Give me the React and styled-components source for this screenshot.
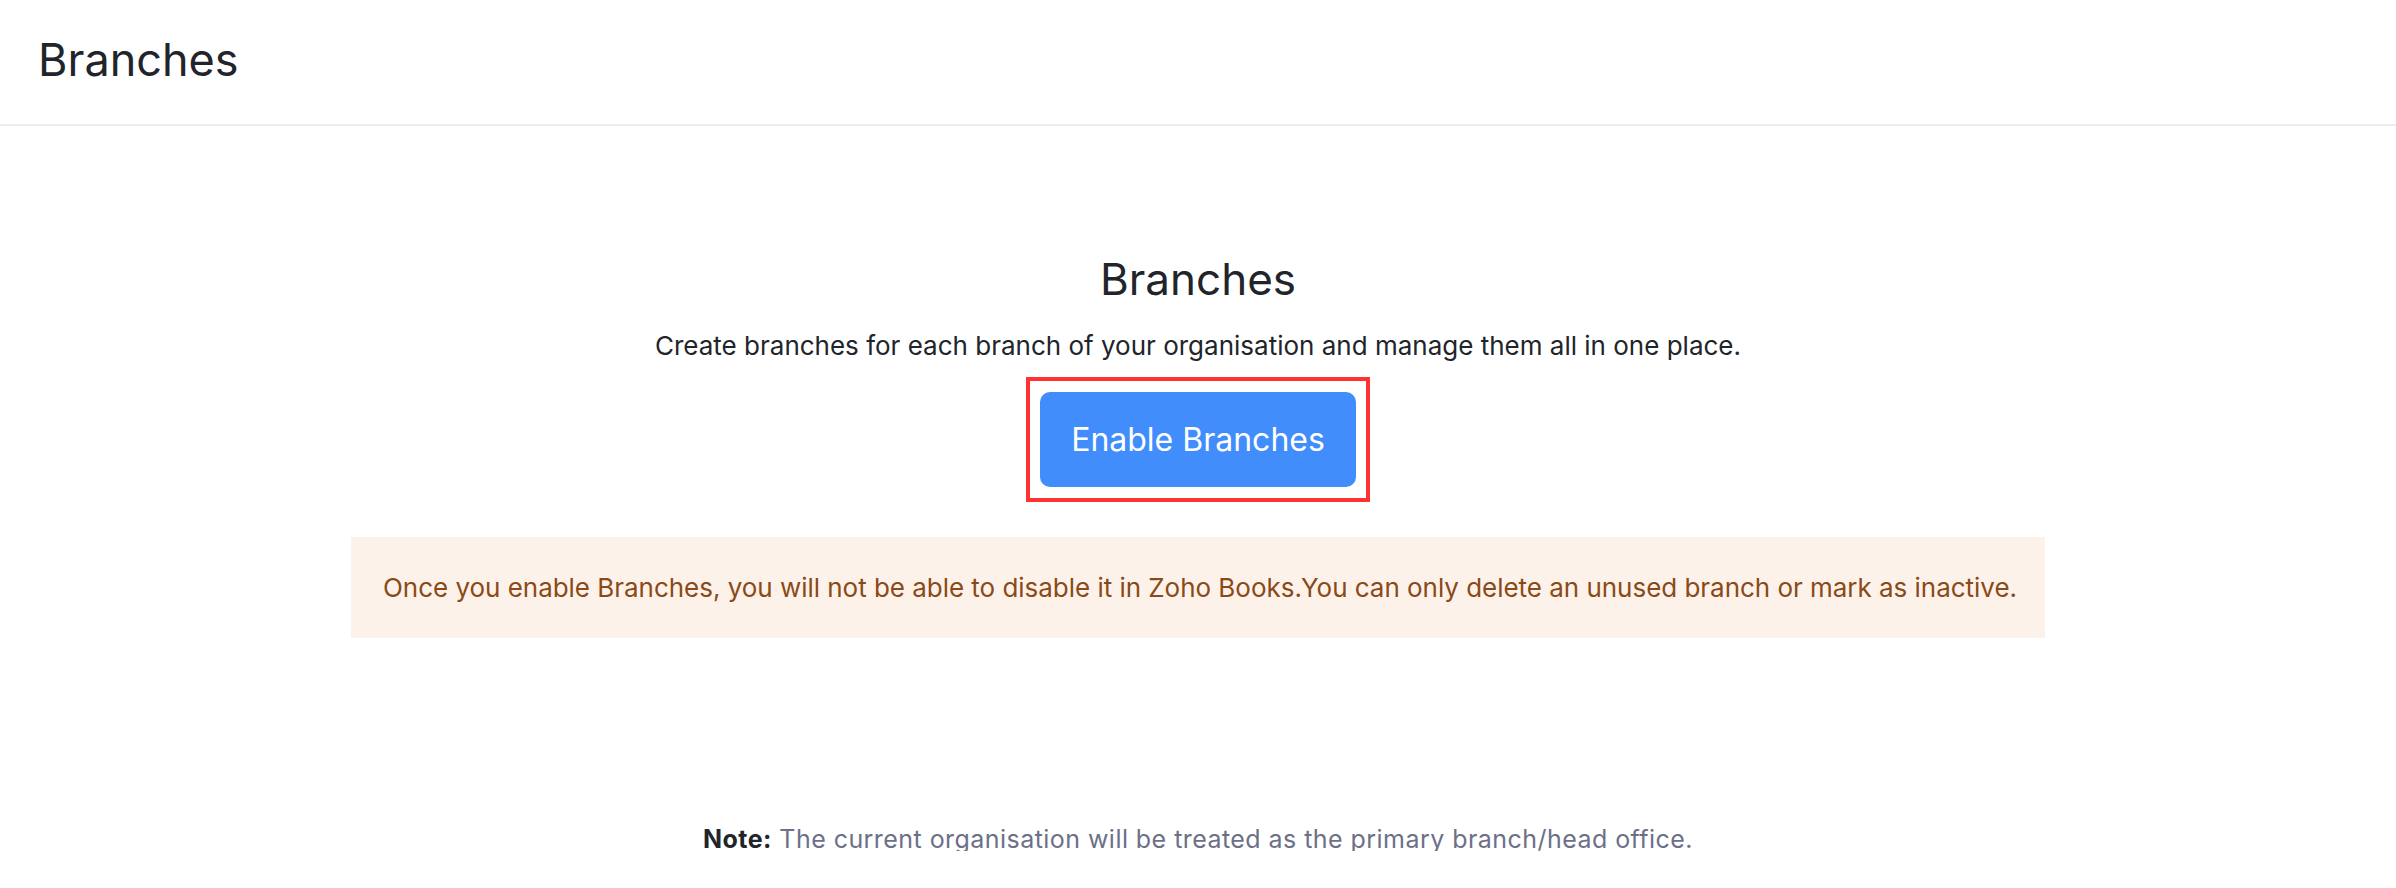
import React from "react"
import styled, { createGlobalStyle } from "styled-components"

const GlobalStyle = createGlobalStyle`
  html, body {
    margin: 0;
    padding: 0;
    background: #fff;
    font-family: Inter, "Noto Sans", sans-serif;
  }
`

const Header = styled.header`
  padding: 37px 38px 42px;
  border-bottom: 2px solid #ececec;
`

const PageTitle = styled.h1`
  margin: 0;
  font-size: 45px;
  line-height: 45px;
  font-weight: 400;
  color: #21252b;
`

const Content = styled.main`
  display: flex;
  flex-direction: column;
  align-items: center;
  padding-top: 131px;
`

const Title = styled.h2`
  margin: 0;
  font-size: 44px;
  line-height: 44px;
  font-weight: 400;
  color: #21252b;
`

const Subtitle = styled.p`
  margin: 32px 0 0;
  font-size: 26px;
  line-height: 26px;
  color: #21252b;
`

const Highlight = styled.div`
  margin-top: 18px;
  padding: 11px 10px;
  border: 4px solid #ff3333;
`

const PrimaryButton = styled.button`
  width: 316px;
  height: 95px;
  border: none;
  border-radius: 10px;
  background: #408dfb;
  color: #fff;
  font-family: inherit;
  font-size: 32px;
  line-height: 32px;
  cursor: pointer;
`

const Warning = styled.div`
  box-sizing: border-box;
  width: 1694px;
  margin-top: 35px;
  padding: 38px 32px 37px;
  background: #fdf2ea;
  color: #8a4a18;
  font-size: 26px;
  line-height: 26px;
  letter-spacing: -0.03px;
  white-space: nowrap;
`

const Note = styled.p`
  margin: 189px 0 0;
  font-size: 25px;
  line-height: 24px;
  letter-spacing: 0.45px;
  color: #6c7088;

  b {
    color: #21252b;
    font-weight: 700;
  }
`

export default function App() {
  return (
    <>
      <GlobalStyle />
      <Header>
        <PageTitle>Branches</PageTitle>
      </Header>
      <Content>
        <Title>Branches</Title>
        <Subtitle>
          Create branches for each branch of your organisation and manage them all in one place.
        </Subtitle>
        <Highlight>
          <PrimaryButton>Enable Branches</PrimaryButton>
        </Highlight>
        <Warning>
          Once you enable Branches, you will not be able to disable it in Zoho Books.You can only
          delete an unused branch or mark as inactive.
        </Warning>
        <Note>
          <b>Note:</b> The current organisation will be treated as the primary branch/head office.
        </Note>
      </Content>
    </>
  )
}
